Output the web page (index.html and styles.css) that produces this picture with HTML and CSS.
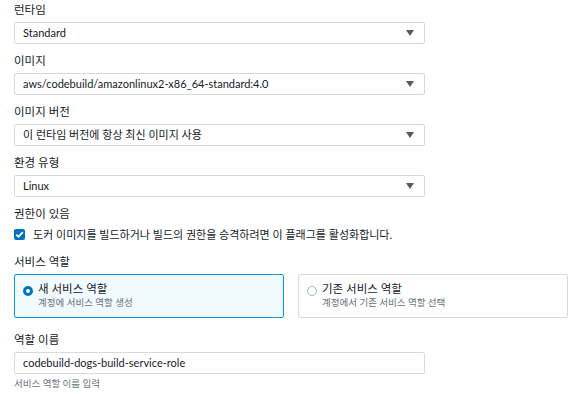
FILE: index.html
```html
<!DOCTYPE html>
<html lang="ko">
<head>
  <meta charset="UTF-8">
  <title>환경</title>
  <link rel="stylesheet" href="styles.css">
</head>
<body>
  <div class="form">
    <div class="field">
      <div class="field-label">런타임</div>
      <div class="select"><span>Standard</span><span class="caret"></span></div>
    </div>
    <div class="field">
      <div class="field-label">이미지</div>
      <div class="select"><span>aws/codebuild/amazonlinux2-x86_64-standard:4.0</span><span class="caret"></span></div>
    </div>
    <div class="field">
      <div class="field-label">이미지 버전</div>
      <div class="select"><span>이 런타임 버전에 항상 최신 이미지 사용</span><span class="caret"></span></div>
    </div>
    <div class="field">
      <div class="field-label">환경 유형</div>
      <div class="select"><span>Linux</span><span class="caret"></span></div>
    </div>

    <div class="field field-check">
      <div class="field-label">권한이 있음</div>
      <label class="check-row">
        <span class="checkbox">
          <svg width="11" height="11" viewBox="0 0 11 11"><path d="M2.3 5.6 L4.5 7.8 L8.8 3.2" fill="none" stroke="#fff" stroke-width="1.8"/></svg>
        </span>
        <span>도커 이미지를 빌드하거나 빌드의 권한을 승격하려면 이 플래그를 활성화합니다.</span>
      </label>
    </div>

    <div class="field field-tiles">
      <div class="field-label">서비스 역할</div>
      <div class="tiles">
        <div class="tile selected">
          <span class="radio"></span>
          <div>
            <div class="tile-title">새 서비스 역할</div>
            <div class="tile-desc">계정에 서비스 역할 생성</div>
          </div>
        </div>
        <div class="tile">
          <span class="radio"></span>
          <div>
            <div class="tile-title">기존 서비스 역할</div>
            <div class="tile-desc">계정에서 기존 서비스 역할 선택</div>
          </div>
        </div>
      </div>
    </div>

    <div class="field">
      <div class="field-label">역할 이름</div>
      <div class="input">codebuild-dogs-build-service-role</div>
      <div class="hint">서비스 역할 이름 입력</div>
    </div>
  </div>
</body>
</html>
```

FILE: styles.css
```css
html, body {
  margin: 0;
  padding: 0;
  background: #fff;
  font-family: Lato, "Noto Sans CJK KR", sans-serif;
  font-size: 11px;
  color: #16191f;
}
.form {
  padding: 2px 5px 0 14px;
}
.field {
  margin-bottom: 9px;
}
.field-label {
  height: 16px;
  line-height: 16px;
  margin-bottom: 4px;
  font-size: 11.5px;
}
/* Select boxes */
.select, .input {
  width: 411px;
  box-sizing: border-box;
  height: 22px;
  border: 1px solid #d5dbdb;
  border-radius: 2px;
  padding: 0 8px;
  display: flex;
  align-items: center;
  justify-content: space-between;
  line-height: 20px;
}
.caret {
  width: 0;
  height: 0;
  border-left: 4.5px solid transparent;
  border-right: 4.5px solid transparent;
  border-top: 6px solid #545b64;
  margin-right: 2px;
}
/* Checkbox */
.field-check {
  margin-top: 9px;
  margin-bottom: 12px;
}
.check-row {
  display: flex;
  align-items: center;
  gap: 8px;
  height: 16px;
}
.checkbox {
  width: 11px;
  height: 11px;
  background: #0073bb;
  border-radius: 2px;
  display: flex;
}
/* Radio tiles */
.field-tiles {
  margin-bottom: 14px;
}
.tiles {
  display: grid;
  grid-template-columns: 270px 270px;
  gap: 14px;
}
.tile {
  box-sizing: border-box;
  height: 44px;
  border: 1px solid #d5dbdb;
  border-radius: 2px;
  padding: 6px 8px;
  display: flex;
  align-items: flex-start;
  gap: 5px;
}
.tile.selected {
  background: #f1faff;
  border-color: #00a1c9;
}
.radio {
  flex: none;
  width: 10px;
  height: 10px;
  box-sizing: border-box;
  border: 1px solid #aab7b8;
  border-radius: 50%;
  margin-top: 5px;
  background: #fff;
}
.tile.selected .radio {
  border: 3px solid #0073bb;
}
.tile-title {
  font-size: 11.5px;
  line-height: 15px;
}
.tile-desc {
  font-size: 9.5px;
  line-height: 13px;
  color: #687078;
}
.input {
  justify-content: flex-start;
}
.hint {
  font-size: 9.5px;
  color: #687078;
  margin-top: 3px;
  line-height: 13px;
}
```
